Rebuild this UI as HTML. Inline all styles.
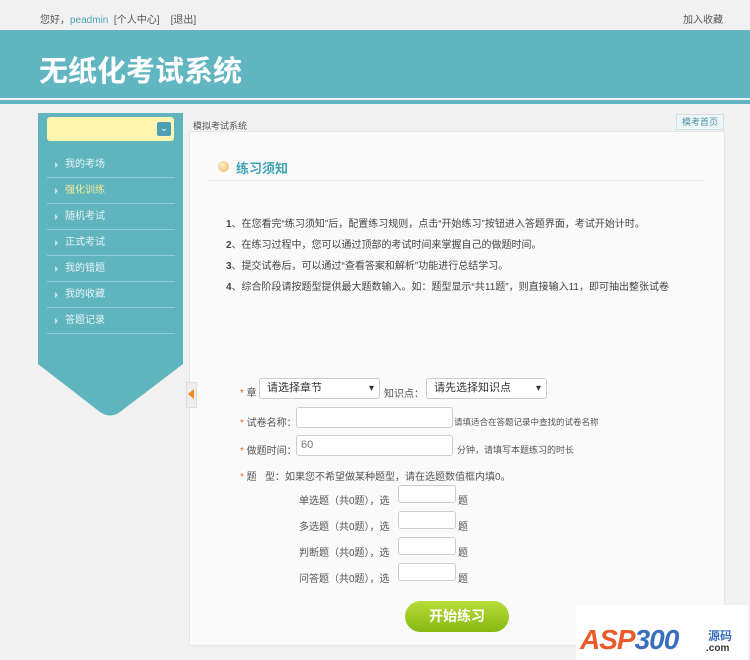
<!DOCTYPE html>
<html><head><meta charset="utf-8"><style>
*{margin:0;padding:0;box-sizing:border-box}
body{width:750px;height:660px;overflow:hidden;background:#f1f1f1;font-family:"Liberation Sans","Noto Sans CJK SC",sans-serif;font-size:10px;color:#444;position:relative}
.a{position:absolute;white-space:nowrap}
.hdr{left:0;top:30px;width:750px;height:68px;background:#62b6c1}
.ln{left:0;top:100px;width:750px;height:4px;background:#62b6c1}
.side{left:38px;top:113px;width:145px;height:240px;background:#5fb4be}
.item{left:47px;width:128px;height:26px;border-bottom:1px solid #8fd0d8;color:#e6f4f6;font-size:10px;line-height:26px;padding-left:18px}
.item:before{content:"";position:absolute;left:8px;top:10px;border-left:3px solid #bfe3e8;border-top:3px solid transparent;border-bottom:3px solid transparent}
.panel{left:189px;top:131px;width:536px;height:515px;background:#fafafa;border:1px solid #e6e6e6}
.sel{background:#fff;border:1px solid #ccc;border-radius:3px;height:21px;font-size:11px;line-height:19px;padding-left:7px;color:#333}
.sel:after{content:"▾";position:absolute;right:5px;top:0;font-size:10px}
.inp{background:#fff;border:1px solid #ccc;border-radius:3px}
.r{color:#e06a3a}
.l{font-size:10px;color:#555}
</style></head><body>
<div class="a" style="left:40px;top:11px;color:#555">您好，<span style="color:#4aa3b0">peadmin</span> &nbsp;[个人中心] &nbsp;&nbsp;&nbsp;[退出]</div>
<div class="a" style="left:683px;top:11px;color:#555">加入收藏</div>
<div class="a hdr"></div>
<div class="a" style="left:39px;top:48px;font-size:29px;font-weight:bold;color:#fff;letter-spacing:0px">无纸化考试系统</div>
<div class="a ln"></div>
<div class="a side"></div>
<svg class="a" style="left:38px;top:352px" width="145" height="66"><path d="M0 0H145V12L82 60Q72 67 62 60L0 12Z" fill="#5fb4be"/></svg>
<div class="a" style="left:47px;top:117px;width:127px;height:24px;background:#fff4b0;border-radius:3px"></div>
<div class="a" style="left:157px;top:122px;width:14px;height:14px;background:#4d9fb5;border-radius:2px;color:#fff;font-size:9px;text-align:center;line-height:13px">⌄</div>
<div class="a item" style="top:152px">我的考场</div>
<div class="a item" style="top:178px;color:#f3eb9a">强化训练</div>
<div class="a item" style="top:204px">随机考试</div>
<div class="a item" style="top:230px">正式考试</div>
<div class="a item" style="top:256px">我的错题</div>
<div class="a item" style="top:282px">我的收藏</div>
<div class="a item" style="top:308px">答题记录</div>
<div class="a" style="left:193px;top:119px;font-size:9px;color:#555">模拟考试系统</div>
<div class="a" style="left:676px;top:114px;width:48px;height:16px;border:1px solid #cfe0e3;background:#eef6f7;color:#4a98a6;font-size:9px;text-align:center;line-height:14px">模考首页</div>
<div class="a panel"></div>
<div class="a" style="left:218px;top:161px;width:11px;height:11px;border-radius:50%;background:radial-gradient(circle at 40% 35%,#fff0c8,#eeb565)"></div>
<div class="a" style="left:236px;top:158px;font-size:13px;font-weight:bold;color:#3fa3b4">练习须知</div>
<div class="a" style="left:208px;top:180px;width:497px;height:1px;background:#e8e8e8"></div>
<div class="a l" style="left:226px;top:214px;line-height:21px;color:#444"><b>1</b>、在您看完“练习须知”后，配置练习规则，点击“开始练习”按钮进入答题界面，考试开始计时。<br><b>2</b>、在练习过程中，您可以通过顶部的考试时间来掌握自己的做题时间。<br><b>3</b>、提交试卷后，可以通过“查看答案和解析”功能进行总结学习。<br><b>4</b>、综合阶段请按题型提供最大题数输入。如：题型显示“共11题”，则直接输入11，即可抽出整张试卷</div>
<div class="a" style="left:186px;top:382px;width:11px;height:26px;background:#eee;border:1px solid #ddd"></div>
<div class="a" style="left:188px;top:389px;border-right:6px solid #f08a20;border-top:5px solid transparent;border-bottom:5px solid transparent"></div>
<div class="a l" style="left:240px;top:384px"><span class="r">*</span> 章</div>
<div class="a sel" style="left:259px;top:378px;width:121px">请选择章节</div>
<div class="a l" style="left:384px;top:385px">知识点：</div>
<div class="a sel" style="left:426px;top:378px;width:121px">请先选择知识点</div>
<div class="a l" style="left:240px;top:414px"><span class="r">*</span> 试卷名称：</div>
<div class="a inp" style="left:296px;top:407px;width:157px;height:21px"></div>
<div class="a" style="left:454px;top:416px;font-size:8.5px;color:#555">请填适合在答题记录中查找的试卷名称</div>
<div class="a l" style="left:240px;top:442px"><span class="r">*</span> 做题时间：</div>
<div class="a inp" style="left:296px;top:435px;width:157px;height:21px;padding:3px 4px;font-size:11px;color:#777">60</div>
<div class="a" style="left:457px;top:443px;font-size:9px;color:#555">分钟，请填写本题练习的时长</div>
<div class="a l" style="left:240px;top:468px"><span class="r">*</span> 题 &nbsp;&nbsp;型：如果您不希望做某种题型，请在选题数值框内填0。</div>
<div class="a l" style="left:299px;top:489px;line-height:26px">单选题（共0题），选<br>多选题（共0题），选<br>判断题（共0题），选<br>问答题（共0题），选</div>
<div class="a inp" style="left:398px;top:485px;width:58px;height:18px"></div>
<div class="a inp" style="left:398px;top:511px;width:58px;height:18px"></div>
<div class="a inp" style="left:398px;top:537px;width:58px;height:18px"></div>
<div class="a inp" style="left:398px;top:563px;width:58px;height:18px"></div>
<div class="a l" style="left:458px;top:489px;line-height:26px">题<br>题<br>题<br>题</div>
<div class="a" style="left:405px;top:601px;width:104px;height:31px;border-radius:16px;background:linear-gradient(#b8dc3a,#86b812);color:#fff;font-size:14px;font-weight:bold;text-align:center;line-height:31px">开始练习</div>
<div class="a" style="left:576px;top:605px;width:172px;height:55px;background:#fff"></div>
<div class="a" style="left:580px;top:624px;font-size:28px;font-weight:bold;font-style:italic;color:#ea5a2a;letter-spacing:-1px">ASP<span style="color:#3a6fc0">300</span></div>
<div class="a" style="left:708px;top:627px;font-size:12px;font-weight:bold;color:#3a6fc0">源码</div>
<div class="a" style="left:706px;top:643px;font-size:10px;font-weight:bold;color:#333">.com</div>
</body></html>
